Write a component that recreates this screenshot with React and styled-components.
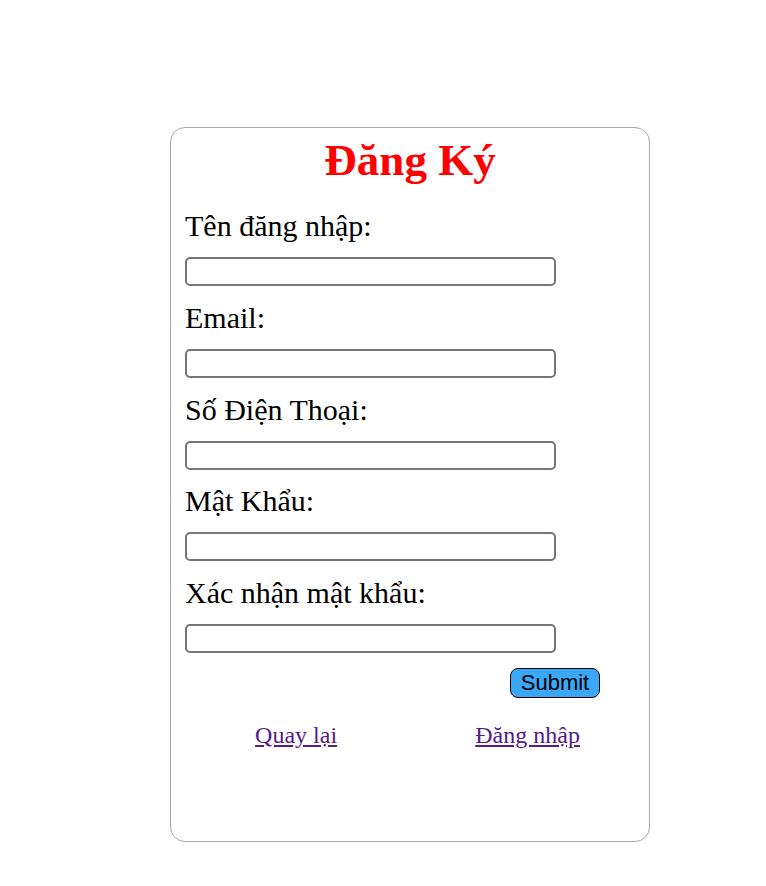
import React from "react";
import styled, { createGlobalStyle } from "styled-components";

const Global = createGlobalStyle`
  body {
    margin: 0;
    font-family: "Liberation Serif", "Times New Roman", serif;
    background: #fff;
  }
`;

const Page = styled.div`
  padding: 127px 0 40px 170px;
`;

const Card = styled.form`
  box-sizing: border-box;
  width: 480px;
  height: 715px;
  border: 1px solid #a8a8a8;
  border-radius: 15px;
  padding: 6px 14px 0 14px;
  display: flex;
  flex-direction: column;
`;

const Title = styled.h1`
  margin: 0 0 23px;
  text-align: center;
  color: #ff0000;
  font-size: 45px;
  font-weight: bold;
  line-height: normal;
`;

const Field = styled.div`
  display: flex;
  flex-direction: column;
  align-items: flex-start;
  margin-bottom: 14.75px;
`;

const Label = styled.label`
  font-size: 30px;
  line-height: 34px;
  color: #000;
  margin-bottom: 14px;
`;

const Input = styled.input`
  box-sizing: border-box;
  width: 371px;
  height: 29px;
  border: 2px solid #767676;
  border-radius: 5px;
  padding: 0 4px;
  font-size: 16px;
  background: #fff;
`;

const Actions = styled.div`
  display: flex;
  justify-content: flex-end;
  padding-right: 35px;
`;

const Submit = styled.button`
  box-sizing: border-box;
  width: 90px;
  height: 30px;
  padding: 0;
  background: #3aa7f7;
  border: 1px solid #000;
  border-radius: 8px;
  font-family: "Liberation Sans", Arial, sans-serif;
  font-size: 22px;
  color: #000;
  line-height: 1;
`;

const Links = styled.div`
  display: flex;
  justify-content: space-around;
  margin: 24px 0 0 1px;
  width: 463px;
`;

const Link = styled.a`
  font-size: 24px;
  color: #551a8b;
  text-decoration: underline;
  line-height: normal;
`;

const fields = [
  { id: "username", label: "Tên đăng nhập:", type: "text" },
  { id: "email", label: "Email:", type: "email" },
  { id: "phone", label: "Số Điện Thoại:", type: "tel" },
  { id: "password", label: "Mật Khẩu:", type: "password" },
  { id: "confirm", label: "Xác nhận mật khẩu:", type: "password" },
];

export default function App() {
  return (
    <>
      <Global />
      <Page>
        <Card onSubmit={(e) => e.preventDefault()}>
          <Title>Đăng Ký</Title>
          {fields.map((f) => (
            <Field key={f.id}>
              <Label htmlFor={f.id}>{f.label}</Label>
              <Input id={f.id} type={f.type} />
            </Field>
          ))}
          <Actions>
            <Submit type="submit">Submit</Submit>
          </Actions>
          <Links>
            <Link href="#back">Quay lại</Link>
            <Link href="#login">Đăng nhập</Link>
          </Links>
        </Card>
      </Page>
    </>
  );
}
